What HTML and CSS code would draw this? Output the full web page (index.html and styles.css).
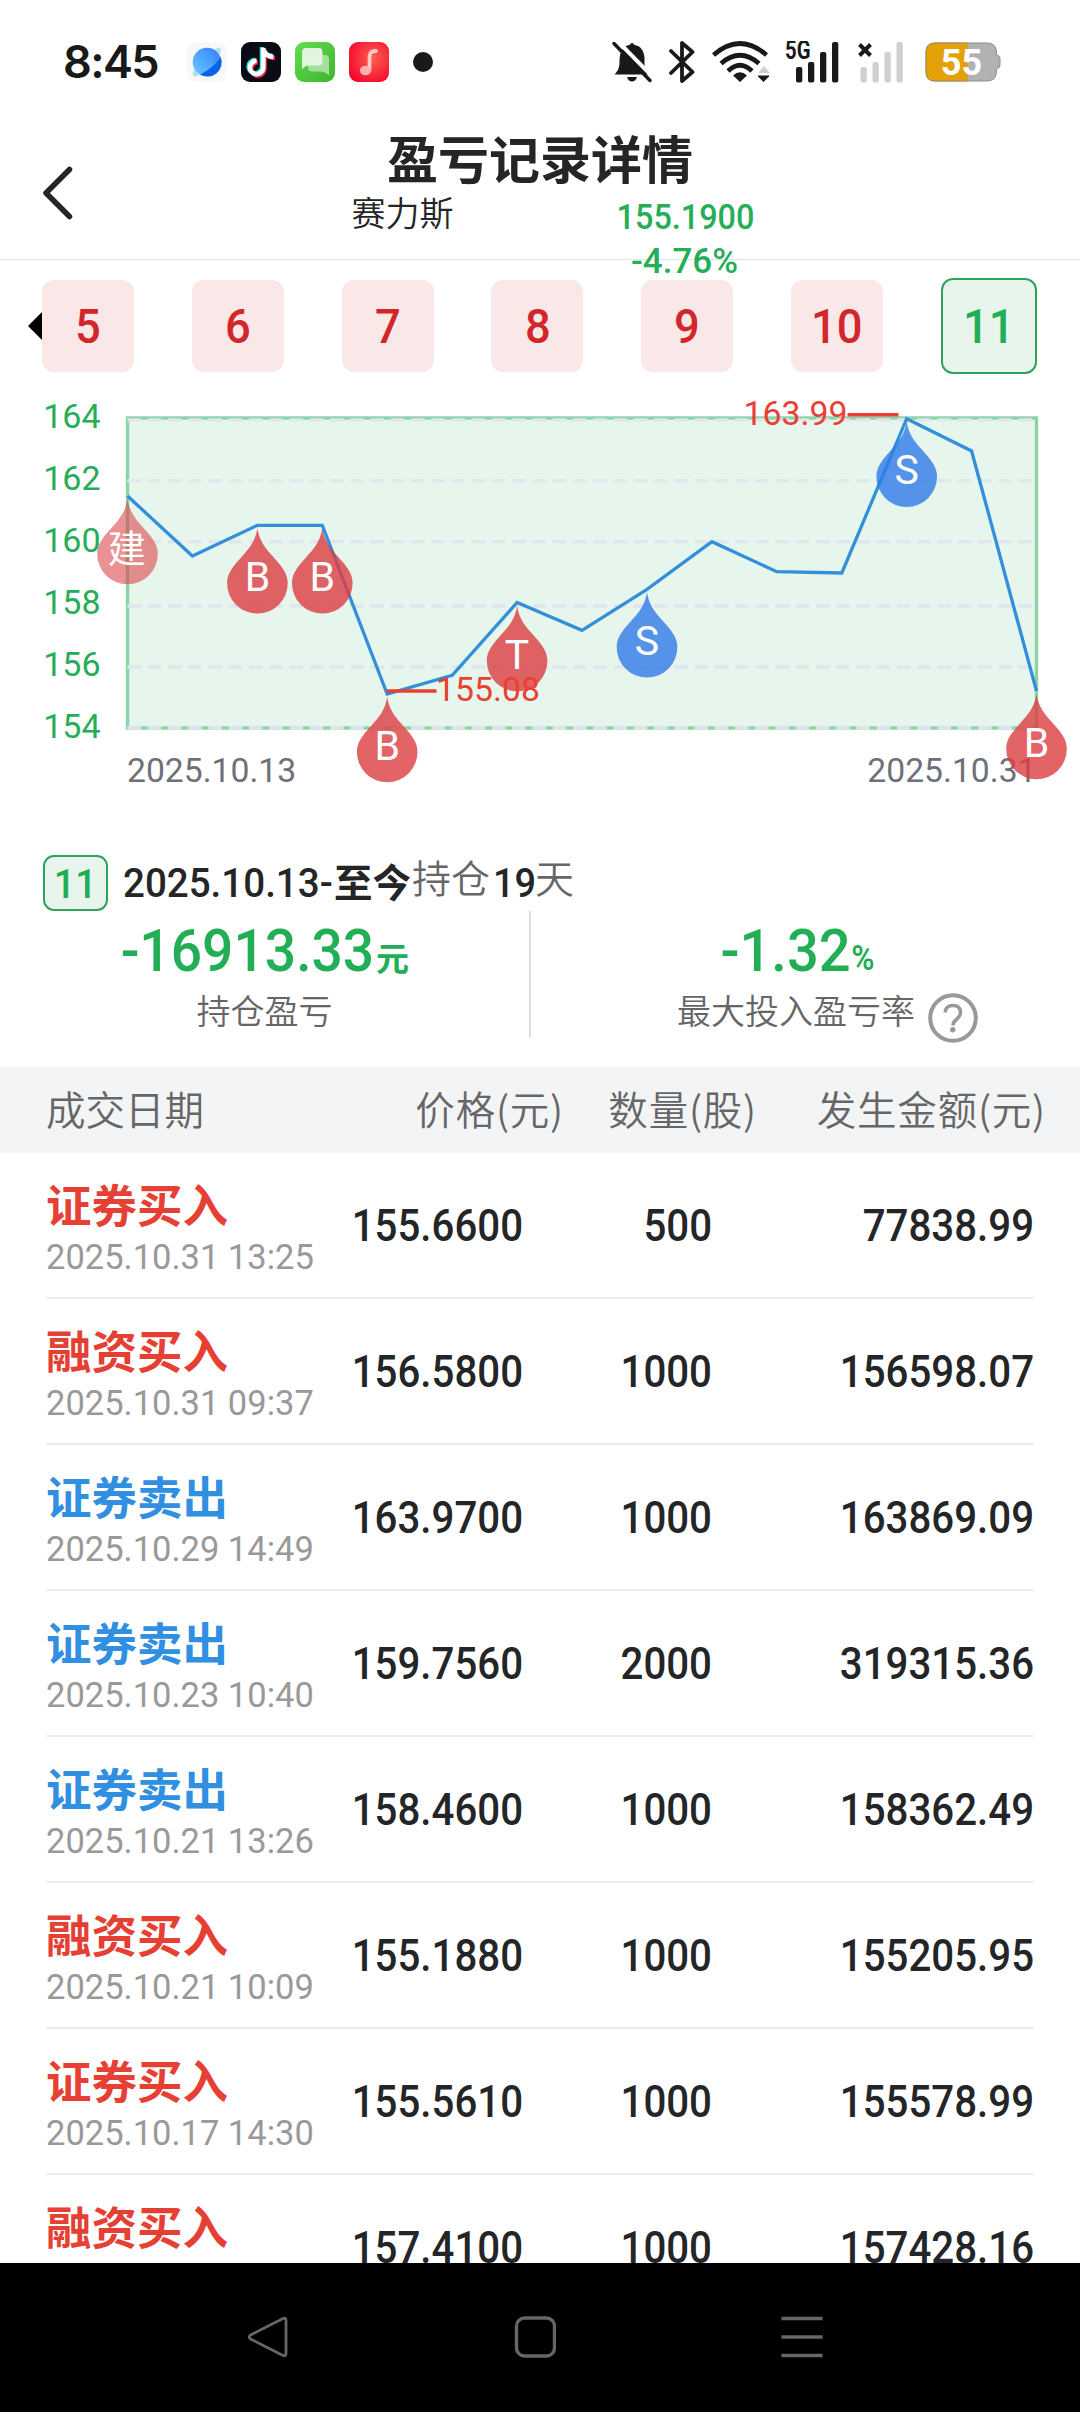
FILE: index.html
```html
<!DOCTYPE html>
<html lang="zh-CN">
<head>
<meta charset="utf-8">
<title>盈亏记录详情</title>
<link rel="stylesheet" href="styles.css">
</head>
<body>
<div class="screen">
  <div class="status">
    <span class="clock">8:45</span>
    <div class="apps">
      <svg width="40" height="40" viewBox="0 0 40 40">
        <defs><linearGradient id="planet" x1="1" y1="0" x2="0" y2="1"><stop offset="0" stop-color="#3b78ee"/><stop offset=".5" stop-color="#4da6ff"/><stop offset="1" stop-color="#6cc6ff"/></linearGradient></defs>
        <rect width="40" height="40" rx="9" fill="#f7f8f9"/>
        <path d="M33 6c3 3-2 10-10 18S7 37 6 33s3-9 10-15S30 4 33 6z" fill="#aee0fb"/>
        <circle cx="20" cy="20" r="14.3" fill="url(#planet)"/>
        <path d="M33.700 15A14.300 14.300 0 0 1 13 32.500C21 28.500 29 22.500 33.700 15z" fill="#0b62e4"/>
      </svg>
      <svg width="40" height="40" viewBox="0 0 40 40">
        <rect width="40" height="40" rx="9" fill="#090b17"/>
        <g fill="none" stroke-width="4.600">
          <path d="M21 5v19.500a6.700 6.700 0 1 1-6.700-6.700M21 6c1 5 4 7.500 10.500 8" stroke="#26e4e0"/>
          <path d="M23.500 8v19a6.700 6.700 0 1 1-6.700-6.700M23.500 8c1 5 4 7.500 10.500 8" stroke="#f5274e"/>
          <path d="M22.300 6v19.500a6.700 6.700 0 1 1-6.700-6.700M22.300 7c1 5 4 7.500 10 8" stroke="#fff"/>
        </g>
      </svg>
      <svg width="40" height="40" viewBox="0 0 40 40">
        <defs><linearGradient id="chat" x1="0" y1="0" x2="1" y2="1"><stop offset="0" stop-color="#62dc50"/><stop offset="1" stop-color="#3eb52d"/></linearGradient></defs>
        <rect width="40" height="40" rx="9" fill="url(#chat)"/>
        <path d="M16 13h14q4 0 4 4v16.500q-3-3.500-8-4H17q-4 0-4-4V16q0-3 3-3z" fill="#a5df9d"/>
        <path d="M11 6h12.500q4 0 4 4v9.500q0 4-4 4H14q-4 0-7 4V10q0-4 4-4z" fill="#e0f6dd"/>
      </svg>
      <svg width="40" height="40" viewBox="0 0 40 40">
        <defs><radialGradient id="tune" cx=".6" cy=".4" r=".7"><stop offset="0" stop-color="#ff5f52"/><stop offset="1" stop-color="#f4062c"/></radialGradient></defs>
        <rect width="40" height="40" rx="9" fill="url(#tune)"/>
        <path d="M27 9q-5 0-6 3-.5 2-.5 6v10" fill="none" stroke="#ffc9c2" stroke-width="3.800" stroke-linecap="round"/>
        <ellipse cx="16.500" cy="28.500" rx="5.600" ry="4.800" fill="#ffb1aa"/>
      </svg>
      <span class="more"></span>
    </div>
    <div class="signals">
      <svg class="bell" width="40" height="42" viewBox="0 0 40 42">
        <path d="M20 2a2 2 0 0 1 2 1.800C29 5 32 10 32.500 17v5c0 5 1.500 8 5 11.500H2.500C6 30 7.500 26.500 7.500 21c0-9 2.500-16 10.500-17.200A2 2 0 0 1 20 2zM15 36h10q-1.500 4.500-5 4.500T15 36z" fill="#191919"/>
        <path d="M4.500-1 41 36" stroke="#fff" stroke-width="4"/>
        <path d="M2 2.500 38 39.500" stroke="#191919" stroke-width="3.400" stroke-linecap="round"/>
      </svg>
      <svg class="bt" width="28" height="42" viewBox="0 0 28 42"><path d="M3 10l21.500 21L14 40V2l10.500 9L3 32" fill="none" stroke="#191919" stroke-width="3.800" stroke-linejoin="round" stroke-linecap="round"/></svg>
      <svg class="wifi" width="58" height="42" viewBox="0 0 58 42">
        <g fill="none" stroke="#191919" stroke-width="4.600"><path d="M1.500 14Q28 -9 54.500 14"/><path d="M9 22.500Q28 6 47 22.500"/><path d="M16 30Q28 18.500 40 30"/></g>
        <path d="M21 34.500Q28 28 35 34.500L28 41z" fill="#191919"/>
        <path d="M52 25l6 7H46z" fill="#d0d0d0"/><path d="M46 34.500h11v1L51.500 41 46 35.500z" fill="#191919"/>
      </svg>
      <svg class="cell" width="54" height="42" viewBox="0 0 54 42">
        <text x="0" y="18.300" class="net" textLength="25.500" lengthAdjust="spacingAndGlyphs">5G</text>
        <g fill="#191919"><rect x="11" y="26" width="6.300" height="15.500" rx="2"/><rect x="23" y="21" width="6.300" height="20.500" rx="2"/><rect x="35" y="11" width="6.300" height="30.500" rx="2"/><rect x="47" y="1" width="6.300" height="40.500" rx="2"/></g>
      </svg>
      <svg class="cell2" width="47" height="42" viewBox="0 0 47 42">
        <path d="M2.500 3.500l11 11M13.500 3.500l-11 11" stroke="#191919" stroke-width="4"/>
        <g fill="#d0d0d0"><rect x="3.500" y="26" width="6.300" height="15.500" rx="2"/><rect x="15.500" y="21" width="6.300" height="20.500" rx="2"/><rect x="27.500" y="11" width="6.300" height="30.500" rx="2"/><rect x="39.500" y="1" width="6.300" height="40.500" rx="2"/></g>
      </svg>
      <svg class="battery" width="76" height="40" viewBox="0 0 76 40">
        <path d="M10 1h52q9 0 9.500 9v3q3.500 1 3.500 3v7q0 3-3.500 4v3q-.5 9-9.500 9H10q-9 0-9-9V10q0-9 9-9z" fill="#b2b2b2" stroke="#8d8d8d"/>
        <path d="M42 1H10q-9 0-9 9v20q0 9 9 9h32z" fill="#e4a105" stroke="#96845a" stroke-width=".8"/>
        <rect x="36" y="1.600" width="6.500" height="36.900" fill="#e4a105"/>
        <text x="36.500" y="32.500" class="level" text-anchor="middle">55</text>
      </svg>
    </div>
  </div>

  <header class="header">
    <div class="back"><svg width="36" height="60" viewBox="0 0 36 60"><path d="M29.500 6.500 6 30l23.500 23.500" fill="none" stroke="#242527" stroke-width="5.500" stroke-linecap="round" stroke-linejoin="round"/></svg></div>
    <div class="heading">
      <h1>盈亏记录详情</h1>
      <div class="sub">
        <span class="stock">赛力斯</span>
        <span class="quote"><b class="num">155.1900</b><b class="num change">-4.76%</b></span>
      </div>
    </div>
  </header>

  <nav class="tabs">
    <span class="prev"></span>
    <div class="tiles">
      <span class="tile"><b class="num">5</b></span><span class="tile"><b class="num">6</b></span><span class="tile"><b class="num">7</b></span><span class="tile"><b class="num">8</b></span><span class="tile"><b class="num">9</b></span><span class="tile"><b class="num">10</b></span><span class="tile active"><b class="num">11</b></span>
    </div>
  </nav>

  <svg class="chart" width="1080" height="456" viewBox="0 374 1080 456">
    <defs><path id="drop" d="M0 3C2 16 8 23 17 33C26 43 30.300 49 30.300 58A30.300 30.300 0 0 1-30.300 58C-30.300 49-26 43-17 33C-8 23-2 16 0 3z"/></defs>
    <rect x="127.500" y="418" width="909" height="310" fill="#e6f6ec" stroke="#8cd3a7" stroke-width="3.400"/>
    <g stroke="#e0e5ef" stroke-width="3.300" stroke-dasharray="13.500 6.750">
      <path d="M127.500 419.800H1036"/><path d="M127.500 480.700H1032"/><path d="M127.500 541.700H1032"/><path d="M127.500 606H1032"/><path d="M127.500 667H1032"/><path d="M127.500 728H1032"/>
    </g>
    <g class="axis">
      <text x="100.500" y="428">164</text><text x="100.500" y="490">162</text><text x="100.500" y="552">160</text><text x="100.500" y="613.500">158</text><text x="100.500" y="675.500">156</text><text x="100.500" y="738">154</text>
    </g>
    <text class="date" x="127" y="782">2025.10.13</text>
    <text class="date" x="1036.500" y="782" text-anchor="end">2025.10.31</text>
    <polyline points="127.500,496 192.400,556 257.400,525.300 322.300,525.300 387.200,694 452.200,675.300 517.100,602.500 582,630.300 647,589.300 711.900,541.700 776.800,571.700 841.800,573 906.700,418.700 971.600,451 1036.500,691" fill="none" stroke="#338fda" stroke-width="3.300"/>
    <use href="#drop" x="127.500" y="496" class="buy open"/>
    <use href="#drop" x="257.400" y="525.300" class="buy"/>
    <use href="#drop" x="322.300" y="525.300" class="buy"/>
    <use href="#drop" x="387.200" y="694" class="buy"/>
    <use href="#drop" x="517.100" y="603" class="buy"/>
    <use href="#drop" x="647" y="589.300" class="sell"/>
    <use href="#drop" x="906.700" y="418.700" class="sell"/>
    <use href="#drop" x="1036.500" y="691" class="buy"/>
    <g class="mark">
      <text class="zh" x="126.800" y="562">建</text><text x="257.400" y="590.700">B</text><text x="322.300" y="590.700">B</text><text x="387.200" y="760">B</text><text x="517.100" y="668.500">T</text><text x="647" y="655">S</text><text x="906.700" y="484">S</text><text x="1036.500" y="757">B</text>
    </g>
    <g stroke="#ea4032" stroke-width="3.400"><path d="M386.500 691H436.500"/><path d="M847.500 414.800H898.500"/></g>
    <text class="peak" x="436" y="701">155.08</text>
    <text class="peak" x="847.500" y="425" text-anchor="end">163.99</text>
  </svg>

  <section class="summary">
    <div class="period">
      <span class="badge"><b class="num">11</b></span>
      <span class="range"><b class="num">2025.10.13-</b></span><span class="now">至今</span><span class="hold">持仓</span><span class="days"><b class="num">19</b></span><span class="hold">天</span>
    </div>
    <div class="stats">
      <div class="stat">
        <p class="value profit"><b class="num amount">-16913.33</b><span class="yuan">元</span></p>
        <p class="label">持仓盈亏</p>
      </div>
      <div class="stat">
        <p class="value"><b class="num rate">-1.32</b><b class="num pct">%</b></p>
        <p class="label with-help">最大投入盈亏率<svg width="50" height="50" viewBox="0 0 50 50"><circle cx="25" cy="25" r="22.800" fill="none" stroke="#999" stroke-width="4"/><path d="M17.200 19.500Q17.500 12.500 25 12.500T32.500 19.500Q32.500 23 28.500 26.500Q25 29 25 32.500" fill="none" stroke="#999" stroke-width="3.500"/><circle cx="24.800" cy="36.700" r="2.700" fill="#999"/></svg></p>
      </div>
    </div>
  </section>

  <div class="thead"><span>成交日期</span><span>价格(元)</span><span>数量(股)</span><span>发生金额(元)</span></div>
  <div class="list">
    <div class="row"><div class="deal"><span class="kind in">证券买入</span><time>2025.10.31 13:25</time></div><b class="num">155.6600</b><b class="num">500</b><b class="num">77838.99</b></div>
    <div class="row"><div class="deal"><span class="kind in">融资买入</span><time>2025.10.31 09:37</time></div><b class="num">156.5800</b><b class="num">1000</b><b class="num">156598.07</b></div>
    <div class="row"><div class="deal"><span class="kind out">证券卖出</span><time>2025.10.29 14:49</time></div><b class="num">163.9700</b><b class="num">1000</b><b class="num">163869.09</b></div>
    <div class="row"><div class="deal"><span class="kind out">证券卖出</span><time>2025.10.23 10:40</time></div><b class="num">159.7560</b><b class="num">2000</b><b class="num">319315.36</b></div>
    <div class="row"><div class="deal"><span class="kind out">证券卖出</span><time>2025.10.21 13:26</time></div><b class="num">158.4600</b><b class="num">1000</b><b class="num">158362.49</b></div>
    <div class="row"><div class="deal"><span class="kind in">融资买入</span><time>2025.10.21 10:09</time></div><b class="num">155.1880</b><b class="num">1000</b><b class="num">155205.95</b></div>
    <div class="row"><div class="deal"><span class="kind in">证券买入</span><time>2025.10.17 14:30</time></div><b class="num">155.5610</b><b class="num">1000</b><b class="num">155578.99</b></div>
    <div class="row"><div class="deal"><span class="kind in">融资买入</span></div><b class="num">157.4100</b><b class="num">1000</b><b class="num">157428.16</b></div>
  </div>

  <footer class="navbar">
    <svg width="42" height="44" viewBox="0 0 42 44"><path d="M36 3.500 3.500 20q-2.500 2 0 4L36 40.500q3 1 3-2V5.500q0-3-3-2z" fill="none" stroke="#666" stroke-width="2.800" stroke-linejoin="round"/></svg>
    <svg width="42" height="44" viewBox="0 0 42 44"><rect x="2.500" y="3" width="38" height="38" rx="8" fill="none" stroke="#666" stroke-width="3.400"/></svg>
    <svg width="42" height="44" viewBox="0 0 42 44"><path d="M.5 3.500h41M.5 22h41M.5 40.500h41" stroke="#666" stroke-width="3.600"/></svg>
  </footer>
</div>
</body>
</html>
```
FILE: styles.css
```css
* { box-sizing: border-box; margin: 0; padding: 0; }
body {
  background: #fff;
  color: #242527;
  font-family: "Noto Sans CJK SC", sans-serif;
}
.screen {
  width: 1080px;
  height: 2412px;
  display: flex;
  flex-direction: column;
  overflow: hidden;
}
.screen > * { flex-shrink: 0; }
svg { display: block; }

/* numerals are set slightly condensed */
.num {
  display: inline-block;
  font-family: Roboto, sans-serif;
  font-weight: 500;
  white-space: nowrap;
  transform: scaleX(.925);
}

/* status bar */
.status {
  height: 124px;
  display: flex;
  align-items: center;
  padding-left: 63px;
}
.clock {
  width: 124px;
  font: 600 45px/56px Inter, sans-serif;
  letter-spacing: -1.6px;
  color: #191919;
}
.apps { display: flex; align-items: center; gap: 14px; }
.more { width: 20px; height: 20px; margin-left: 10px; border-radius: 50%; background: #191919; }
.signals { display: flex; align-items: center; margin-left: 179px; }
.bt { margin-left: 16px; }
.wifi { margin-left: 16px; }
.cell { margin-left: 15px; }
.cell2 { margin-left: 18px; }
.battery { margin-left: 21px; }
.net { font: 700 25px Roboto, sans-serif; fill: #191919; }
.level { font: 700 36px Roboto, sans-serif; fill: #fff; }

/* title */
.header {
  height: 136px;
  display: grid;
  grid-template-columns: 120px 840px;
  border-bottom: 1px solid #e3e3e3;
}
.back { padding: 39px 0 0 40px; }
.heading { text-align: center; }
.heading h1 { font-size: 51px; line-height: 66px; font-weight: 700; }
.sub { display: flex; width: 566px; margin-left: 141px; }
.stock, .quote { width: 283px; }
.stock { font-size: 34px; line-height: 43px; font-weight: 350; }
.quote {
  display: flex;
  flex-direction: column;
  align-items: center;
  margin-top: 6px;
  font-size: 35px;
  line-height: 44px;
  color: #26ad58;
}
.change { transform: translateX(-1px); }

/* record tabs */
.tabs {
  display: flex;
  align-items: center;
  height: 96px;
  margin-top: 18px;
  padding-left: 28px;
}
.prev {
  border: solid transparent;
  border-width: 14px 14px 14px 0;
  border-right-color: #000;
}
.tiles { width: 995px; display: flex; justify-content: space-between; align-items: center; }
.tile {
  width: 92px;
  height: 92px;
  border-radius: 12px;
  background: #fae8e8;
  color: #d3262b;
  font-size: 49px;
  text-align: center;
}
.tile .num { line-height: 94px; vertical-align: top; }
.tile.active {
  width: 96px;
  height: 96px;
  border: 2px solid #2fa35b;
  background: #e7f5ec;
  color: #22ae55;
}

/* chart */
.chart text { font-family: Roboto, "Noto Sans CJK SC", sans-serif; font-size: 34px; }
.axis text { fill: #26ad58; text-anchor: end; }
.chart .date { fill: #6e7079; font-size: 33.700px; }
.chart .peak { fill: #ea4032; font-size: 33.800px; }
.chart .mark text { fill: #fff; text-anchor: middle; font-size: 41px; }
.chart .mark .zh { font-size: 38px; }
.buy { fill: #dc3d41; fill-opacity: .8; }
.buy.open { fill-opacity: .57; }
.sell { fill: #2f7be8; fill-opacity: .8; }

/* holding summary */
.summary { height: 237px; padding-top: 25px; }
.period { display: flex; align-items: center; height: 56px; padding-left: 43px; }
.badge {
  width: 65px;
  height: 56px;
  border: 2px solid #2fa35b;
  border-radius: 11px;
  background: #e7f5ec;
  color: #22ae55;
  font-size: 41px;
  text-align: center;
}
.badge .num { line-height: 55px; vertical-align: top; }
.range, .days { font-size: 41px; line-height: 56px; }
.range .num, .days .num { transform-origin: left; vertical-align: top; }
.range .num { transform: scaleX(.94); }
.range { width: 211px; margin-left: 15px; }
.now { font-size: 38.500px; font-weight: 700; padding-bottom: 6px; }
.hold { font-size: 39px; font-weight: 350; color: #666; padding-bottom: 14px; }
.period .hold { margin-left: 1px; }
.days { width: 41px; margin-left: 3px; }
.stats { display: flex; width: 1062px; }
.stat { width: 531px; height: 127px; text-align: center; }
.stat:first-child { border-right: 2px solid #dfdfdf; }
.value { height: 78px; display: flex; justify-content: center; color: #22ae55; line-height: 79px; }
.profit { padding-right: 17px; }
.amount, .rate { font-size: 59px; }
.amount { transform: scaleX(.935); transform-origin: right; }
.rate { transform: scaleX(.95); }
.yuan { font-size: 33px; font-weight: 700; padding: 7px 0 0 2px; }
.pct { font-size: 35px; font-weight: 600; padding-top: 8px; margin-left: -4px; transform: scaleX(.9); }
.label { font-size: 34px; line-height: 41px; font-weight: 350; color: #666; }
.with-help { display: flex; justify-content: center; padding-left: 62px; }
.with-help svg { margin: 4px 0 0 13px; }

/* deals table */
.thead {
  display: grid;
  grid-template-columns: 250px 268px 193px 289px;
  height: 86px;
  padding-left: 46px;
  background: #f3f4f6;
  color: #666;
  font-size: 39.500px;
  line-height: 82px;
  font-weight: 350;
}
.thead span + span { text-align: right; letter-spacing: .8px; }
.list { height: 1110px; overflow: hidden; }
.row {
  display: grid;
  grid-template-columns: 290px 187px 189px 322px;
  align-items: center;
  height: 146px;
  margin: 0 46px;
  border-bottom: 2px solid #ededed;
  font-size: 43.500px;
}
.row > .num { text-align: right; transform-origin: right; padding-top: 3px; }
.deal { align-self: start; padding-top: 20px; }
.kind { display: block; font-size: 45.500px; line-height: 60px; font-weight: 700; }
.in { color: #e63f34; }
.out { color: #308fe0; }
time {
  display: block;
  font-family: Roboto, sans-serif;
  font-size: 34.500px;
  line-height: 48px;
  color: #999;
  white-space: nowrap;
}

/* system navigation */
.navbar {
  height: 149px;
  display: flex;
  background: #000;
  padding: 52px 0 0 247px;
  gap: 225px;
}
```
